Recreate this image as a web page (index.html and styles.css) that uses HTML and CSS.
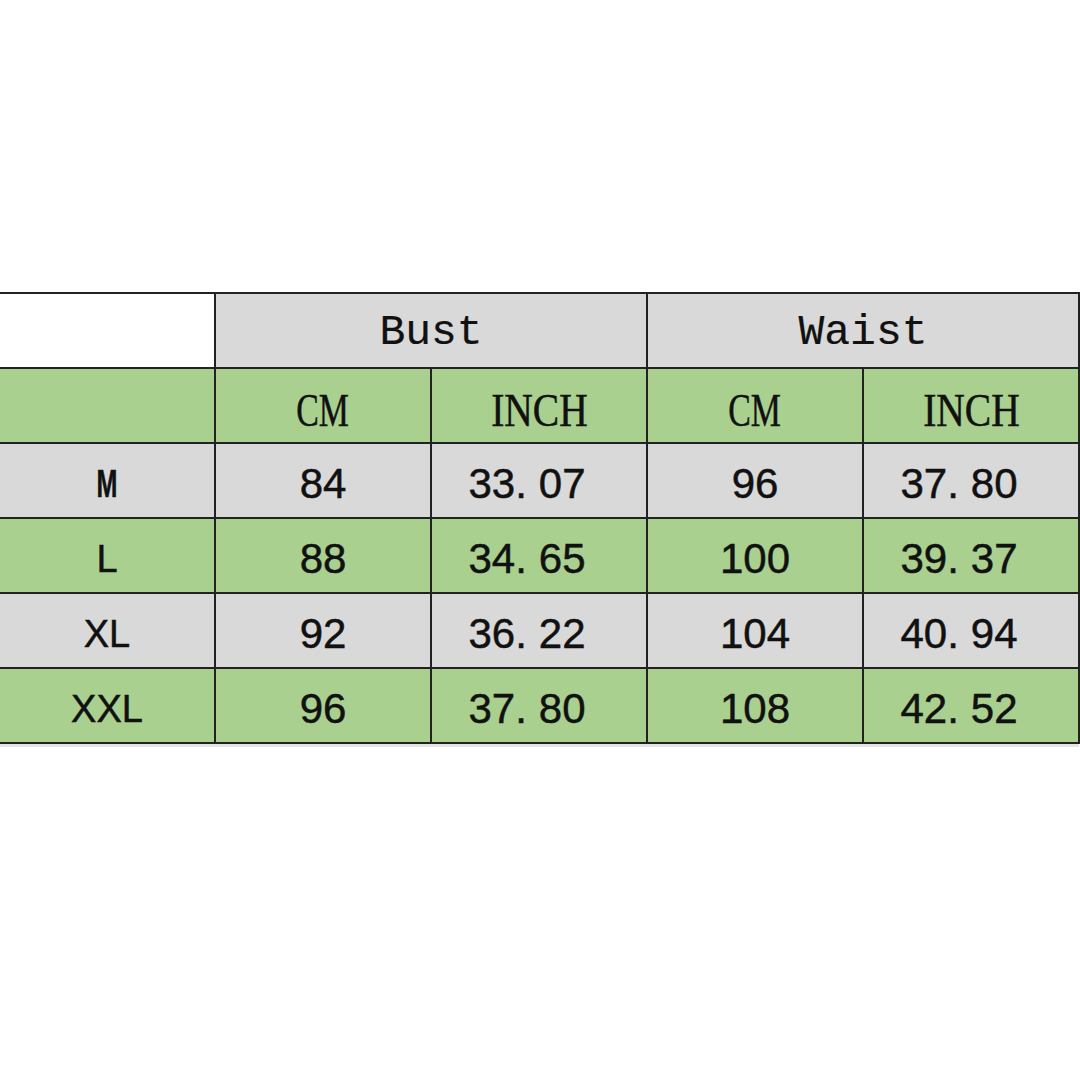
FILE: index.html
```html
<!DOCTYPE html>
<html>
<head>
<meta charset="utf-8">
<link rel="stylesheet" href="styles.css">
</head>
<body>
<div class="page">
  <table class="chart">
    <colgroup>
      <col class="c-size"><col class="c-val"><col class="c-val"><col class="c-val"><col class="c-val">
    </colgroup>
    <tr class="r-head">
      <td class="blank"></td>
      <td colspan="2" class="group"><span>Bust</span></td>
      <td colspan="2" class="group"><span>Waist</span></td>
    </tr>
    <tr class="r-unit green">
      <td></td>
      <td class="unit"><span>CM</span></td>
      <td class="unit"><span class="wide">INCH</span></td>
      <td class="unit"><span>CM</span></td>
      <td class="unit"><span class="wide">INCH</span></td>
    </tr>
    <tr class="gray">
      <td class="size"><span class="narrow">M</span></td><td>84</td><td class="dec">33.<span class="gap"></span>07</td><td>96</td><td class="dec">37.<span class="gap"></span>80</td>
    </tr>
    <tr class="green">
      <td class="size">L</td><td>88</td><td class="dec">34.<span class="gap"></span>65</td><td>100</td><td class="dec">39.<span class="gap"></span>37</td>
    </tr>
    <tr class="gray">
      <td class="size">XL</td><td>92</td><td class="dec">36.<span class="gap"></span>22</td><td>104</td><td class="dec">40.<span class="gap"></span>94</td>
    </tr>
    <tr class="green">
      <td class="size">XXL</td><td>96</td><td class="dec">37.<span class="gap"></span>80</td><td>108</td><td class="dec">42.<span class="gap"></span>52</td>
    </tr>
  </table>
  <div class="strip"></div>
</div>
</body>
</html>
```
FILE: styles.css
```css
html, body {
  margin: 0;
  padding: 0;
  background: #ffffff;
}
.page {
  padding-top: 292px;
  width: 1080px;
}
.chart {
  border-collapse: collapse;
  table-layout: fixed;
  width: 1079px;
  font-family: "Liberation Sans", Arial, sans-serif;
  color: #111;
  -webkit-text-stroke: 0.5px #111;
}
.c-size { width: 215px; }
.c-val { width: 216px; }
.chart td {
  border: 2px solid #222222;
  height: 73px;
  padding: 6px 0 0 0;
  box-sizing: border-box;
  text-align: center;
  vertical-align: middle;
  font-size: 42px;
  line-height: 1;
}
.chart tr { height: 75px; }
.r-head td { background: #d9d9d9; }
.r-head td.blank { background: #ffffff; }
.chart tr td:first-child { border-left: none; }
.gray td { background: #d9d9d9; }
.green td { background: #a9d08e; }
.chart td.dec { padding-right: 24px; }
.gap { display: inline-block; width: 12px; }
.group span {
  font-family: "Liberation Mono", "Courier New", monospace;
  font-size: 43px;
  position: relative;
  top: -2px;
  -webkit-text-stroke: 0.2px #111;
}
.chart td.unit { padding-top: 10px; }
.unit span {
  display: inline-block;
  font-family: "Liberation Serif", "Times New Roman", serif;
  font-size: 47px;
  transform: scaleX(0.72);
}
.unit span.wide { transform: scaleX(0.84); }
.chart td.size {
  font-size: 38px;
}
.narrow {
  display: inline-block;
  font-weight: bold;
  transform: scaleX(0.66);
}
.strip {
  width: 1079px;
  height: 3px;
  background: #e4e4e4;
}
```
